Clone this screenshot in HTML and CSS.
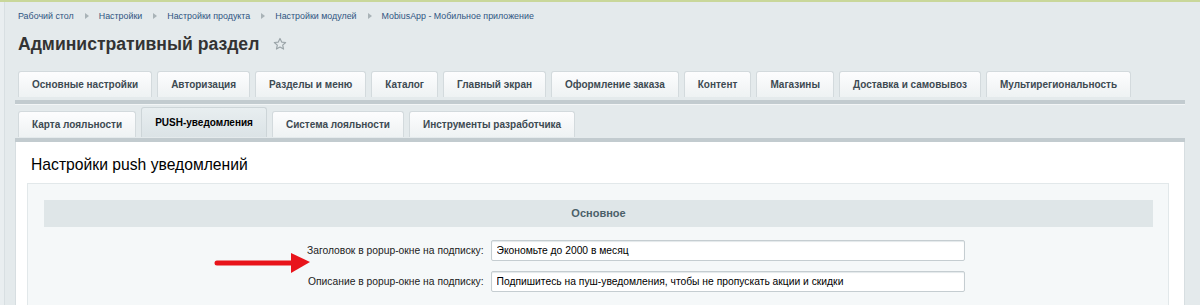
FILE: index.html
```html
<!DOCTYPE html>
<html lang="ru">
<head>
    <meta charset="UTF-8">
    <title>Административный раздел</title>
    <link rel="stylesheet" href="styles.css">
</head>
<body>
    <div class="topline"></div>
    <div class="layout">
        <div class="side"></div>
        <div class="main">
            <!-- Хлебные крошки -->
            <div class="crumbs">
                <a href="#">Рабочий стол</a><span class="sep"></span>
                <a href="#">Настройки</a><span class="sep"></span>
                <a href="#">Настройки продукта</a><span class="sep"></span>
                <a href="#">Настройки модулей</a><span class="sep"></span>
                <a href="#">MobiusApp - Мобильное приложение</a>
            </div>

            <h1 class="title">Административный раздел
                <svg class="star" width="14" height="14" viewBox="0 0 24 24"><path d="M12 2.5l2.9 6.2 6.8.7-5.1 4.6 1.5 6.7L12 17.3l-6.1 3.4 1.5-6.7-5.1-4.6 6.8-.7z" fill="none" stroke="#9aa4a8" stroke-width="2" stroke-linejoin="round"/></svg>
            </h1>

            <!-- Вкладки модуля -->
            <div class="tabs">
                <div class="tab">Основные настройки</div>
                <div class="tab">Авторизация</div>
                <div class="tab">Разделы и меню</div>
                <div class="tab">Каталог</div>
                <div class="tab">Главный экран</div>
                <div class="tab">Оформление заказа</div>
                <div class="tab">Контент</div>
                <div class="tab">Магазины</div>
                <div class="tab">Доставка и самовывоз</div>
                <div class="tab">Мультирегиональность</div>
            </div>
            <div class="tabs tabs-sub">
                <div class="tab">Карта лояльности</div>
                <div class="tab active">PUSH-уведомления</div>
                <div class="tab">Система лояльности</div>
                <div class="tab">Инструменты разработчика</div>
            </div>

            <!-- Содержимое вкладки -->
            <div class="panel">
                <h2 class="panel-title">Настройки push уведомлений</h2>
                <div class="edit">
                    <div class="section">Основное</div>
                    <div class="row">
                        <label>Заголовок в popup-окне на подписку:</label>
                        <input type="text" value="Экономьте до 2000 в месяц">
                    </div>
                    <div class="row">
                        <label>Описание в popup-окне на подписку:</label>
                        <input type="text" value="Подпишитесь на пуш-уведомления, чтобы не пропускать акции и скидки">
                    </div>
                </div>
            </div>
        </div>
    </div>

    <!-- Стрелка-указатель -->
    <svg class="arrow" width="100" height="26" viewBox="0 0 100 26">
        <line x1="5" y1="13" x2="82" y2="13" stroke="#e8141b" stroke-width="5" stroke-linecap="round"/>
        <polygon points="79,3 98,12 79,23" fill="#e8141b"/>
    </svg>
</body>
</html>
```

FILE: styles.css
```css
* {
    margin: 0;
    padding: 0;
    box-sizing: border-box;
}

body {
    background: #e4eaec;
    font-family: 'Liberation Sans', Arial, sans-serif;
    color: #000;
    height: 305px;
    overflow: hidden;
    position: relative;
}

.topline {
    height: 2px;
    background: #c9d79a;
}

.layout {
    display: flex;
    height: 303px;
}

.side {
    flex: 0 0 5px;
    background: #e9eef0;
    border-right: 1px solid #d8dfe2;
}

.main {
    flex: 1;
    min-width: 0;
    padding: 0 15px 0 10px;
}

/* Хлебные крошки */
.crumbs {
    display: flex;
    align-items: center;
    padding: 5px 0 0 3px;
    height: 22px;
    font-size: 8.9px;
}

.crumbs a {
    color: #2f5582;
    text-decoration: none;
}

.sep {
    width: 0;
    height: 0;
    margin: 0 10px 0 11px;
    border-top: 3px solid transparent;
    border-bottom: 3px solid transparent;
    border-left: 4px solid #a9b3b7;
}

.title {
    display: flex;
    align-items: center;
    gap: 14px;
    padding-left: 3px;
    height: 40px;
    font-size: 17.6px;
    color: #333;
}

/* Вкладки */
.tabs {
    display: flex;
    gap: 5px;
    align-items: flex-end;
    padding: 7px 0 3px 3px;
    border-bottom: 4px solid #c2cbcf;
    box-shadow: 0 1px 0 #f2f5f6;
}

.tabs-sub {
    padding: 3px 0 1px 3px;
}

.tab {
    height: 26px;
    line-height: 25px;
    padding: 0 13px;
    font-size: 10px;
    font-weight: bold;
    color: #3d4a52;
    background: linear-gradient(#fdfdfe, #eef2f3);
    border: 1px solid #d3dadd;
    border-bottom: none;
    border-radius: 3px 3px 0 0;
    white-space: nowrap;
}

.tab.active {
    height: 30px;
    line-height: 29px;
    color: #000;
    background: linear-gradient(#e8eef0, #dbe3e6);
    border-color: #cdd5d8;
}

/* Панель настроек */
.panel {
    background: #fff;
    border-left: 1px solid #d7dee1;
    border-right: 1px solid #d7dee1;
    padding: 12px 15px 0 11px;
    height: 170px;
}

.panel-title {
    font-size: 15.7px;
    font-weight: normal;
    line-height: 22px;
    padding-left: 4px;
    margin-bottom: 7px;
    color: #000;
}

.edit {
    background: #f5f8f9;
    border: 1px solid #e2e8ea;
    padding: 16px 15px 20px 16px;
}

.section {
    height: 27px;
    line-height: 27px;
    text-align: center;
    background: #dfe6e8;
    font-size: 11px;
    font-weight: bold;
    color: #4b6069;
    margin-bottom: 8px;
}

.row {
    display: grid;
    grid-template-columns: 40% 60%;
    align-items: center;
    padding: 5px 0;
}

.row label {
    text-align: right;
    padding-right: 4px;
    font-size: 10.3px;
    color: #222;
}

.row input {
    width: 474px;
    height: 21px;
    margin-left: 3px;
    padding: 0 5px;
    font-family: 'Liberation Sans', Arial, sans-serif;
    font-size: 10.3px;
    color: #000;
    background: #fff;
    border: 1px solid #c5cdd1;
    border-radius: 2px;
    box-shadow: inset 0 1px 1px #e3e8ea;
}

.arrow {
    position: absolute;
    left: 212px;
    top: 250px;
}
```
